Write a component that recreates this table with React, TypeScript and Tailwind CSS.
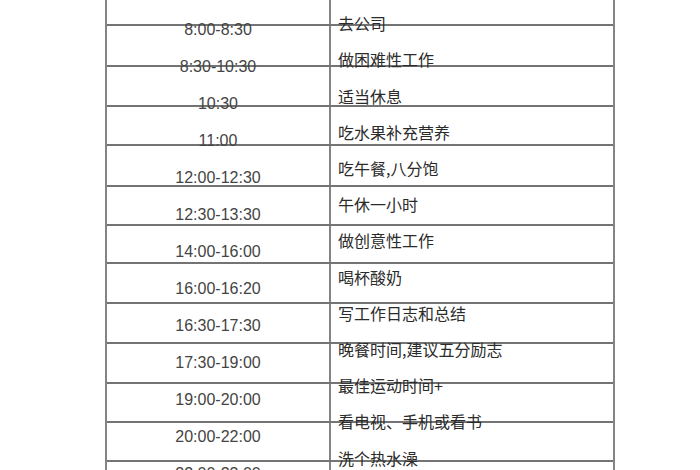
const rows = [
  ["7:30-8:00", ""],
  ["8:00-8:30", "去公司"],
  ["8:30-10:30", "做困难性工作"],
  ["10:30", "适当休息"],
  ["11:00", "吃水果补充营养"],
  ["12:00-12:30", "吃午餐,八分饱"],
  ["12:30-13:30", "午休一小时"],
  ["14:00-16:00", "做创意性工作"],
  ["16:00-16:20", "喝杯酸奶"],
  ["16:30-17:30", "写工作日志和总结"],
  ["17:30-19:00", "晚餐时间,建议五分励志"],
  ["19:00-20:00", "最佳运动时间+"],
  ["20:00-22:00", "看电视、手机或看书"],
  ["22:00-23:00", "洗个热水澡"],
];

// line positions in the scan drift away from the text, so the grid is its own layer
const lineHeights = [39, 41, 40, 39, 41, 39, 38, 40, 40, 40, 39, 39, 40];

const font = { fontFamily: '"Liberation Sans", "Noto Sans CJK SC", sans-serif' };

export default function App() {
  return (
    <div className="h-[470px] w-[700px] overflow-hidden bg-white" style={font}>
      <div className="relative ml-[105px] flex w-[510px] flex-col">
        {/* ruled grid */}
        <div className="-mt-[13px] border-x-2 border-[#858585]">
          {lineHeights.map((h, i) => (
            <div
              key={i}
              className="grid grid-cols-[224px_1fr] border-b-2 border-[#747474]"
              style={{ height: h }}
            >
              <div className="border-r-2 border-[#858585]" />
              <div />
            </div>
          ))}
        </div>

        {/* text layer */}
        <div className="absolute inset-0 grid grid-cols-[226px_1fr]">
          <div className="-mt-[26px] flex flex-col">
            {rows.map(([time]) => (
              <div
                key={time}
                className="flex h-[37px] items-center justify-center text-[16px] text-[#444]"
              >
                {time}
              </div>
            ))}
          </div>
          <div className="-mt-[31px] flex flex-col pl-[7px]">
            {rows.map(([time, task]) => (
              <div
                key={time}
                className="flex h-[36.2px] items-center text-[16px] text-[#2b2b2b]"
                style={{ fontFamily: '"Noto Sans CJK SC", "Liberation Sans", sans-serif' }}
              >
                {task}
              </div>
            ))}
          </div>
        </div>
      </div>
    </div>
  );
}
